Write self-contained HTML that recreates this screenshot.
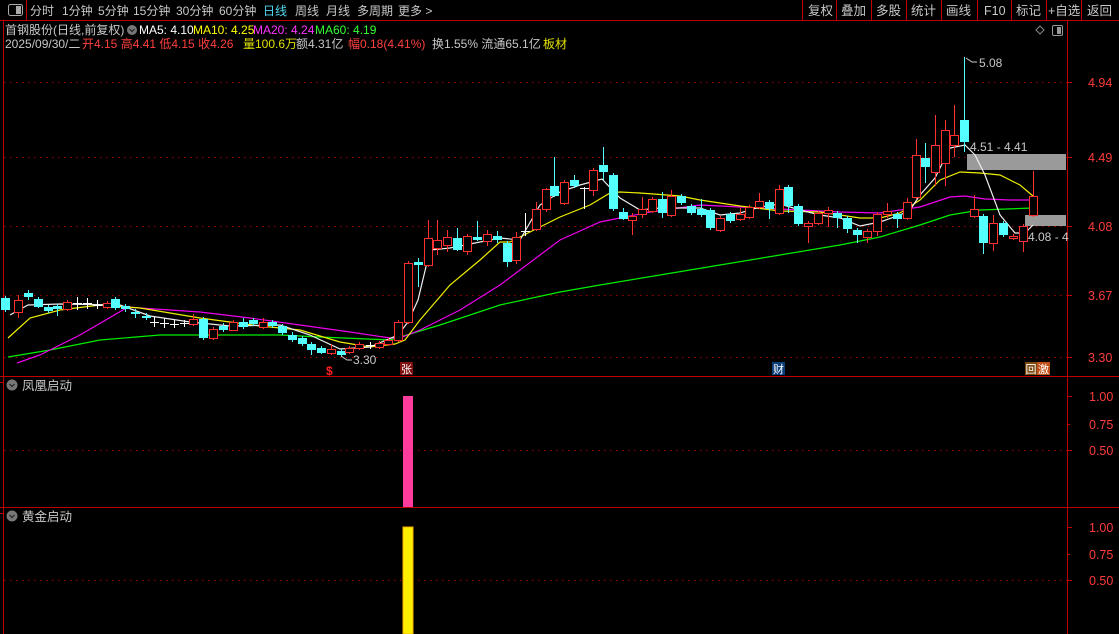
<!DOCTYPE html>
<html><head><meta charset="utf-8"><style>
html,body{margin:0;padding:0;background:#000;width:1119px;height:634px;overflow:hidden;font-family:"Liberation Sans","Noto Sans CJK SC",sans-serif;}
svg{position:absolute;left:0;top:0}
</style></head><body>
<svg id="s" width="1119" height="634" xmlns="http://www.w3.org/2000/svg" font-family="Liberation Sans, Noto Sans CJK SC, sans-serif">
<line x1="0" y1="20.5" x2="1119" y2="20.5" stroke="#c00000"/>
<line x1="26.5" y1="0" x2="26.5" y2="20" stroke="#c00000"/>
<line x1="3.5" y1="20" x2="3.5" y2="634" stroke="#c00000"/>
<line x1="1067.5" y1="20" x2="1067.5" y2="634" stroke="#c00000"/>
<line x1="0" y1="376.5" x2="1119" y2="376.5" stroke="#c00000"/>
<line x1="0" y1="507.5" x2="1119" y2="507.5" stroke="#c00000"/>
<g stroke="#c00000"><line x1="802.5" y1="0" x2="802.5" y2="20"/><line x1="836.5" y1="0" x2="836.5" y2="20"/><line x1="871.5" y1="0" x2="871.5" y2="20"/><line x1="906.5" y1="0" x2="906.5" y2="20"/><line x1="941.5" y1="0" x2="941.5" y2="20"/><line x1="977.5" y1="0" x2="977.5" y2="20"/><line x1="1011.5" y1="0" x2="1011.5" y2="20"/><line x1="1046.5" y1="0" x2="1046.5" y2="20"/><line x1="1081.5" y1="0" x2="1081.5" y2="20"/></g>
<rect x="8.5" y="4.5" width="14" height="11" rx="2" fill="none" stroke="#aaa"/><rect x="16" y="6" width="5" height="8" fill="#aaa"/>
<g fill="#c8c8c8" font-size="12">
<text x="30" y="15">分时</text><text x="62" y="15">1分钟</text><text x="98" y="15">5分钟</text><text x="133" y="15">15分钟</text><text x="176" y="15">30分钟</text><text x="219" y="15">60分钟</text>
<text x="263" y="15" fill="#50d8f0">日线</text><text x="295" y="15">周线</text><text x="326" y="15">月线</text><text x="357" y="15">多周期</text><text x="398" y="15">更多 &gt;</text>
</g>
<g fill="#c8c8c8" font-size="12.5">
<text x="808" y="15">复权</text><text x="841" y="15">叠加</text><text x="876" y="15">多股</text><text x="911" y="15">统计</text><text x="946" y="15">画线</text><text x="984" y="15">F10</text><text x="1016" y="15">标记</text><text x="1048" y="15">+自选</text><text x="1087" y="15">返回</text>
</g>
<g font-size="12">
<text x="5" y="34" fill="#c8c8c8">首钢股份(日线,前复权)</text>
<circle cx="132" cy="30" r="5" fill="#777"/><path d="M129.5 29 L132 31.5 L134.5 29" stroke="#222" fill="none" stroke-width="1.2"/>
<text x="139" y="34" fill="#fff">MA5: 4.10</text><text x="193" y="34" fill="#ffff00">MA10: 4.25</text><text x="253" y="34" fill="#ff33ff">MA20: 4.24</text><text x="315" y="34" fill="#33ff33">MA60: 4.19</text>
<text x="5" y="48" fill="#c8c8c8">2025/09/30/二</text>
<text x="82" y="48" fill="#ff4040">开4.15 高4.41 低4.15 收4.26</text>
<text x="243" y="48" fill="#e0e000">量100.6万</text>
<text x="296" y="48" fill="#c8c8c8">额4.31亿</text>
<text x="348" y="48" fill="#ff4040">幅0.18(4.41%)</text>
<text x="432" y="48" fill="#c8c8c8">换1.55% 流通65.1亿</text><text x="543" y="48" fill="#e0e000">板材</text>
</g>
<path d="M1036 30 L1040 26 L1044 30 L1040 34 Z" fill="none" stroke="#888"/>
<rect x="1052.5" y="25.5" width="10" height="10" rx="1.5" fill="none" stroke="#999"/><rect x="1057" y="27" width="4" height="7" fill="#999"/>
<g stroke="#a00000" stroke-dasharray="1.5 4.5">
<line x1="4" y1="82.5" x2="1067" y2="82.5"/><line x1="4" y1="157.5" x2="1067" y2="157.5"/><line x1="4" y1="226.5" x2="1067" y2="226.5"/><line x1="4" y1="295.5" x2="1067" y2="295.5"/><line x1="4" y1="357.5" x2="1067" y2="357.5"/>
<line x1="4" y1="450.5" x2="1067" y2="450.5"/><line x1="4" y1="580.5" x2="1067" y2="580.5"/>
</g>
<g stroke="#c00000"><line x1="1067" y1="82.5" x2="1072" y2="82.5"/><line x1="1067" y1="157.5" x2="1072" y2="157.5"/><line x1="1067" y1="226.5" x2="1072" y2="226.5"/><line x1="1067" y1="295.5" x2="1072" y2="295.5"/><line x1="1067" y1="357.5" x2="1072" y2="357.5"/>
<line x1="1067" y1="396.5" x2="1072" y2="396.5"/><line x1="1067" y1="424.5" x2="1070" y2="424.5"/><line x1="1067" y1="450.5" x2="1072" y2="450.5"/>
<line x1="1067" y1="527.5" x2="1072" y2="527.5"/><line x1="1067" y1="554.5" x2="1070" y2="554.5"/><line x1="1067" y1="580.5" x2="1072" y2="580.5"/>
<line x1="0" y1="382.5" x2="3" y2="382.5"/><line x1="0" y1="513.5" x2="3" y2="513.5"/></g>
<g fill="#ff3c3c" font-size="12.5">
<text x="1088" y="87">4.94</text><text x="1088" y="162">4.49</text><text x="1088" y="231">4.08</text><text x="1088" y="300">3.67</text><text x="1088" y="362">3.30</text>
<text x="1089" y="401">1.00</text><text x="1089" y="429">0.75</text><text x="1089" y="455">0.50</text>
<text x="1089" y="532">1.00</text><text x="1089" y="559">0.75</text><text x="1089" y="585">0.50</text>
</g>
<rect x="967" y="154" width="99" height="16" fill="#9a9a9a"/>
<rect x="1025" y="215" width="41" height="11" fill="#9a9a9a"/>
<g fill="none" stroke-width="1.2">
<polyline stroke="#00ee00" points="8,357 50,350 100,340 160,335 280,335 320,337 390,340 400,337 440,325 500,305 560,292 600,285 660,275 720,265 780,255 840,245 880,237 920,225 950,215 980,210 1033,208"/>
<polyline stroke="#ee00ee" points="17,363 40,355 80,335 128,307 140,308 200,312 250,318 300,325 350,332 390,338 400,338 420,330 460,310 500,285 520,270 560,240 600,222 620,218 650,212 700,205 760,208 800,210 840,212 880,213 920,207 950,197 965,196 985,199 1010,200 1030,200"/>
<polyline stroke="#eeee00" points="8,338 30,318 60,310 100,305 140,308 200,318 260,326 300,330 340,342 370,347 395,344 405,340 420,320 450,285 480,260 500,242 510,242 530,232 560,217 590,205 610,193 620,192 640,193 680,196 700,200 740,206 780,211 820,212 860,218 880,218 900,213 920,200 940,180 960,172 980,173 1000,175 1020,185 1033,196"/>
<polyline stroke="#eeeeee" points="10,315 28,305 60,304 120,305 150,316 190,322 230,326 280,325 310,335 340,349 370,347 398,335 408,322 418,300 430,250 450,248 500,238 520,240 540,205 560,192 580,185 602,179 620,198 640,210 660,208 700,208 720,215 740,213 760,207 780,204 800,210 820,215 840,218 860,226 880,222 900,215 910,210 920,195 935,178 950,148 965,145 975,155 985,175 1000,215 1015,233 1025,233 1033,225"/>
</g>
<g id="c"></g>
<g fill="#c8c8c8" font-size="12">
<path d="M966 58 L972 62 L977 62" stroke="#ccc" fill="none"/><text x="979" y="67">5.08</text>
<text x="970" y="151">4.51 - 4.41</text>
<text x="1028" y="241">4.08 - 4</text>
<path d="M341 356 L347 360 L352 360" stroke="#ccc" fill="none"/><text x="353" y="364">3.30</text>
</g>
<text x="326" y="375" fill="#ff2020" font-size="12" font-weight="bold">$</text>
<rect x="400" y="362" width="13" height="13" fill="#801010"/><text x="401" y="373" fill="#fff" font-size="11">张</text>
<rect x="772" y="362" width="13" height="13" fill="#0a3e78"/><text x="773" y="373" fill="#fff" font-size="11">财</text>
<rect x="1025" y="362" width="12" height="13" fill="#7a4a10"/><text x="1025.5" y="373" fill="#fff" font-size="11">回</text>
<rect x="1037" y="362" width="13" height="13" fill="#c05018"/><text x="1038" y="373" fill="#fff" font-size="11">激</text>
<circle cx="12" cy="385" r="5.5" fill="#777"/><path d="M9.5 384 L12 386.5 L14.5 384" stroke="#222" fill="none" stroke-width="1.2"/>
<text x="22" y="390" fill="#c8c8c8" font-size="12.5">凤凰启动</text>
<rect x="403" y="396" width="10" height="111" fill="#ff3c9c"/>
<circle cx="12" cy="516" r="5.5" fill="#777"/><path d="M9.5 515 L12 517.5 L14.5 515" stroke="#222" fill="none" stroke-width="1.2"/>
<text x="22" y="521" fill="#c8c8c8" font-size="12.5">黄金启动</text>
<rect x="403" y="527" width="10" height="107" fill="#ffee00" stroke="#f0b000"/>
</svg>
<script>
var d=[
[5,'c',298,310,296,312],[18,'r',300,312,295,318],[28,'c',293,297,290,300],[38,'c',299,307,297,308],[48,'c',307,311,305,313],[57,'c',306,309,304,316],[67,'r',302,309,300,311],[77,'x',303,303,297,310],[87,'x',303,303,298,309],[97,'x',305,305,300,309],[107,'r',303,307,301,309],[115,'c',299,308,297,310],[125,'c',306,309,304,312],[135,'c',312,314,309,318],[146,'c',316,318,313,320],[154,'x',322,322,317,327],[164,'x',323,323,318,328],[174,'x',324,324,320,328],[184,'x',323,323,320,327],[193,'r',319,324,314,326],[203,'c',319,338,317,340],[213,'r',329,338,327,340],[223,'c',326,330,323,332],[233,'r',322,330,320,331],[243,'c',322,327,318,329],[253,'c',320,324,318,326],[263,'r',322,327,318,329],[272,'c',322,326,320,328],[282,'c',326,333,324,335],[292,'c',335,340,332,342],[302,'c',338,344,336,346],[311,'c',344,350,342,355],[321,'c',348,353,346,354],[331,'r',349,353,344,355],[341,'c',351,355,349,357],[349,'r',348,352,346,354],[359,'r',344,348,342,350],[370,'x',345,345,342,349],[379,'r',343,347,341,349],[388,'r',340,344,338,346],[398,'r',322,340,320,342],
[408,'r',263,322,261,324],[418,'c',262,265,258,287],[428,'r',238,265,220,267],[437,'r',240,248,220,255],[447,'r',237,245,230,252],[457,'c',238,250,228,251],[467,'r',236,251,234,255],[477,'c',237,240,221,241],[487,'r',234,241,230,246],[497,'c',236,240,231,243],[507,'c',243,262,241,267],[516,'r',237,260,232,264],[525,'x',231,231,213,236],[536,'r',209,229,202,231],[546,'r',189,209,188,212],[554,'c',186,196,157,197],[564,'r',182,203,180,205],[574,'c',180,186,175,188],[584,'x',188,188,187,209],[593,'r',170,190,168,196],[603,'c',165,172,147,180],[613,'c',175,209,173,211],
[623,'c',212,219,208,220],[632,'r',216,220,213,235],[642,'r',209,214,197,218],[652,'r',199,211,197,213],[662,'c',199,213,192,218],[671,'r',196,215,190,217],[681,'c',196,203,194,205],[691,'c',206,213,204,215],[701,'c',209,215,199,217],[710,'c',210,228,208,230],[720,'r',218,230,216,232],[730,'c',214,221,212,223],[740,'r',214,219,208,221],[749,'r',207,217,205,219],[759,'r',201,207,193,209],[769,'c',202,209,200,219],[779,'r',189,213,185,215],[788,'c',187,206,185,213],[798,'c',206,224,204,226],[808,'r',223,226,221,243],[818,'r',213,223,211,225],[828,'r',210,213,207,227],[837,'c',213,218,211,228],[847,'c',218,229,216,233],[857,'c',230,235,228,243],[867,'r',231,237,229,243],[877,'r',214,231,212,236],[887,'r',211,214,203,218],[897,'c',214,219,212,228],
[907,'r',202,218,198,220],[916,'r',155,197,139,199],[925,'c',158,167,143,183],[935,'r',145,172,115,186],[945,'r',130,163,120,186],[954,'r',135,145,105,157],[964,'c',120,142,57,152],[974,'r',209,216,195,218],[983,'c',216,243,214,254],[993,'r',223,243,215,251],[1003,'c',223,235,221,237],[1013,'r',236,238,234,240],[1023,'r',226,241,224,252],[1033,'r',196,215,171,217]
];
var g=document.getElementById('c'),h='';
d.forEach(function(a){var x=a[0],t=a[1],b1=a[2],b2=a[3],hi=a[4],lo=a[5];
var col=t=='r'?'#ff3030':t=='c'?'#54ffff':'#ffffff';
h+='<line x1="'+(x+.5)+'" y1="'+hi+'" x2="'+(x+.5)+'" y2="'+lo+'" stroke="'+col+'"/>';
if(t=='x'){h+='<line x1="'+(x-4)+'" y1="'+(b1+.5)+'" x2="'+(x+5)+'" y2="'+(b1+.5)+'" stroke="#fff"/>';}
else if(t=='r'){h+='<rect x="'+(x-3.5)+'" y="'+(b1+.5)+'" width="8" height="'+Math.max(1,b2-b1)+'" fill="#000" stroke="#ff3030"/>';}
else{h+='<rect x="'+(x-4)+'" y="'+b1+'" width="9" height="'+Math.max(2,b2-b1)+'" fill="#54ffff"/>';}
});
g.innerHTML=h;
</script>
</body></html>
